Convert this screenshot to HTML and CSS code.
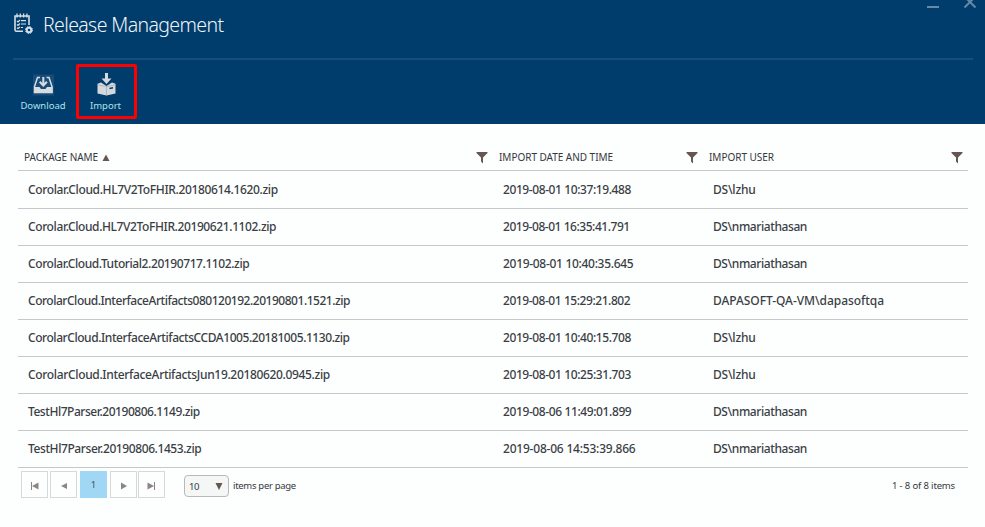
FILE: index.html
```html
<!DOCTYPE html>
<html lang="en">
<head>
<meta charset="utf-8">
<title>Release Management</title>
<link rel="stylesheet" href="styles.css">
</head>
<body>
<header class="blade">
  <div class="title-row">
    <svg class="title-icon" width="20" height="22" viewBox="0 0 20 22" fill="none" stroke="#d5dfe6" stroke-width="1.6">
      <path d="M10 18.200H3.500Q2 18.200 2 16.800V3H16V12"/>
      <path d="M4 .5V4.500M7.300 .5V4.500M10.600 .5V4.500M13.900 .5V4.500" stroke-width="1.300"/>
      <path d="M4 8l1 1 2-2M4 11.500l1 1 2-2M4 14.800l1 .8 2-1.500M8 7.700H13M8 11H13M8 14.500H10" stroke-width="1.200"/>
      <circle cx="16" cy="17" r="2.300" stroke-width="2"/>
      <circle cx="16" cy="17" r="3.500" stroke-width="1" stroke-dasharray="1.500 1.250"/>
    </svg>
    <h1>Release Management</h1>
    <div class="window-buttons">
      <svg width="52" height="10" viewBox="0 0 52 10" stroke="#6689a6" fill="none"><path d="M1 7H13" stroke-width="2"/><path d="M38.500-3.500L49.500 7.500M49.500-3.500L38.500 7.500" stroke-width="2"/></svg>
    </div>
  </div>
  <nav class="toolbar">
    <button class="tool">
      <svg width="21" height="21" viewBox="0 0 21 21"><path fill="#174d78" d="M0 0H21V21H0z"/><path d="M7 3H4.500L1.500 12V18H19V12L16 3H13.500" fill="none" stroke="#d7dce0" stroke-width="1.500"/><path d="M1 12.500H6.500L8 14.500H12.500L14 12.500H19.500V18.500H1z" fill="#d7dce0"/><path d="M10.300 2.500V10M6.700 7.300L10.300 11L13.900 7.300" fill="none" stroke="#d7dce0" stroke-width="2"/></svg>
      <span class="download-label">Download</span>
    </button>
    <button class="tool selected">
      <svg width="21" height="24" viewBox="0 0 21 24" fill="#d4d7db"><path d="M9 1H12V6.500H15.500L10.500 12L5.500 6.500H9z"/><path d="M5 10.500L10.500 14L16 10.500L19.500 11.800V21.500L10.500 23.500L1.500 21.500V11.800z"/><path d="M1.500 12.800L10.500 14.500V23.500M10.500 14.500L19.500 12.800" fill="none" stroke="#8fa3b3" stroke-width=".6"/><path d="M13.500 16.500L17 15.700" stroke="#003c6c" stroke-width="1.400"/></svg>
      <span class="import-label">Import</span>
    </button>
  </nav>
</header>
<main>
  <table>
    <colgroup><col class="name-col"><col class="date-col"><col></colgroup>
    <thead><tr>
      <th><div class="head"><span>PACKAGE NAME</span><svg class="sort" width="8" height="7"><path d="M4 .5L7.500 7H.5z"/></svg><svg class="filter" width="12" height="12"><path d="M.5 0H11.500V1L7 5.500V11.500L5 9.500V5.500L.5 1z"/></svg></div></th>
      <th><div class="head"><span>IMPORT DATE AND TIME</span><svg class="filter" width="12" height="12"><path d="M.5 0H11.500V1L7 5.500V11.500L5 9.500V5.500L.5 1z"/></svg></div></th>
      <th><div class="head"><span>IMPORT USER</span><svg class="filter" width="12" height="12"><path d="M.5 0H11.500V1L7 5.500V11.500L5 9.500V5.500L.5 1z"/></svg></div></th>
    </tr></thead>
    <tbody>
      <tr><td class="t35">Corolar.Cloud.HL7V2ToFHIR.20180614.1620.zip</td><td class="t42">2019-08-01 10:37:19.488</td><td class="t20">DS\lzhu</td></tr>
      <tr><td class="t39">Corolar.Cloud.HL7V2ToFHIR.20190621.1102.zip</td><td class="t46">2019-08-01 16:35:41.791</td><td class="t42">DS\nmariathasan</td></tr>
      <tr><td class="t42">Corolar.Cloud.Tutorial2.20190717.1102.zip</td><td class="t30">2019-08-01 10:40:35.645</td><td class="t42">DS\nmariathasan</td></tr>
      <tr><td class="t47">CorolarCloud.InterfaceArtifacts080120192.20190801.1521.zip</td><td class="t44">2019-08-01 15:29:21.802</td><td class="t05">DAPASOFT-QA-VM\dapasoftqa</td></tr>
      <tr><td class="t44">CorolarCloud.InterfaceArtifactsCCDA1005.20181005.1130.zip</td><td class="t42">2019-08-01 10:40:15.708</td><td class="t20">DS\lzhu</td></tr>
      <tr><td class="t34">CorolarCloud.InterfaceArtifactsJun19.20180620.0945.zip</td><td class="t42">2019-08-01 10:25:31.703</td><td class="t20">DS\lzhu</td></tr>
      <tr><td class="t46">TestHl7Parser.20190806.1149.zip</td><td class="t39">2019-08-06 11:49:01.899</td><td class="t42">DS\nmariathasan</td></tr>
      <tr><td class="t42">TestHl7Parser.20190806.1453.zip</td><td class="t20">2019-08-06 14:53:39.866</td><td class="t42">DS\nmariathasan</td></tr>
    </tbody>
  </table>
  <footer class="pager">
    <div class="pages">
      <button><svg width="9" height="8"><path d="M1 0H2V8H1zM8.500 .5V7.500L2 4z"/></svg></button>
      <button><svg width="8" height="8"><path d="M7 1V7L1 4z"/></svg></button>
      <button class="current">1</button>
      <button><svg width="8" height="8"><path d="M1 .5V7.500L7 4z"/></svg></button>
      <button class="last"><svg width="9" height="8"><path d="M7 0H8V8H7zM.5 .5V7.500L7 4z"/></svg></button>
    </div>
    <div class="size"><span>10</span><svg width="8" height="7"><path d="M.5 0H7.500L4 7z"/></svg></div>
    <span class="per-page">items per page</span>
    <span class="count">1 - 8 of 8 items</span>
  </footer>
</main>
</body>
</html>
```

FILE: styles.css
```css
* { box-sizing: border-box; }
body { margin: 0; width: 985px; height: 527px; overflow: hidden; background: #fdfefe; color: #343840; font-family: "Noto Sans", "Open Sans", sans-serif; }
button { font: inherit; padding: 0; border: 0; background: none; }
svg { display: block; flex: none; }

.blade { height: 124px; padding: 0 12px 0 13px; background: #003c6c; }
.title-row { display: flex; height: 60px; border-bottom: 2px solid #174d78; }
.title-icon { margin-top: 13px; }
h1 { margin: 10px 0 0 10px; font-size: 19.5px; line-height: 30px; font-weight: 300; letter-spacing: -.62px; color: #f0f5f8; white-space: nowrap; }
.window-buttons { margin-left: auto; margin-right: -5px; }
.toolbar { display: flex; padding-top: 4px; }
.tool { display: flex; flex-direction: column; align-items: center; width: 60px; height: 55px; padding-top: 9px; color: #b1e1e7; font-size: 9.5px; line-height: 14px; }
.tool svg { height: 24px; margin-bottom: 2px; }
.tool.selected { width: 61px; margin-left: 3px; padding-top: 5px; border: 3px solid #fe0000; border-radius: 2px; }
.tool.selected svg { margin-bottom: 3px; }
.import-label { margin-right: 2px; }

main { padding: 20px 17px 0 18px; }
table { width: 950px; table-layout: fixed; border-collapse: separate; border-spacing: 0; }
.name-col { width: 475px; }
.date-col { width: 210px; }
th, td { padding: 0 0 0 10px; border-bottom: 1px solid #c5c8c8; text-align: left; white-space: nowrap; }
th { height: 27px; padding: 0 5px 0 6px; font-size: 10px; font-weight: 400; line-height: 26px; letter-spacing: -.03px; }
td { height: 37px; color: #3a3e45; font-size: 12px; font-weight: 500; line-height: 36px; }
tbody tr:first-child td { height: 38px; }
.head { display: flex; align-items: center; height: 26px; }
.head svg, .pager svg { fill: #65564f; }
.sort { margin: 1px 0 0 4px; }
.filter { margin: 1px 0 0 auto; }

/* Tracking steps, in hundredths of a pixel */
.t05 { letter-spacing: -.05px; }
.t20 { letter-spacing: -.21px; }
.t30 { letter-spacing: -.3px; }
.t34 { letter-spacing: -.335px; }
.t35 { letter-spacing: -.35px; }
.t39 { letter-spacing: -.39px; }
.t42 { letter-spacing: -.41px; }
.t44 { letter-spacing: -.44px; }
.t46 { letter-spacing: -.46px; }
.t47 { letter-spacing: -.475px; }

.pager { display: flex; height: 40px; padding-left: 3px; font-size: 9.5px; }
.pages { display: flex; gap: 2px; padding-top: 3px; }
.pages button { display: flex; align-items: center; justify-content: center; width: 27px; height: 27px; border: 1px solid #d6d9d9; }
.pages .current { margin: 0 1px; background: #9fd7f5; border-color: #9fd7f5; color: #43515c; }
.pages .last { margin-left: -1px; }
.pages svg { fill: #8d8584; margin-top: 3px; }
.size { display: flex; align-items: center; justify-content: space-between; width: 45px; height: 22px; margin: 7px 0 0 19px; padding: 0 5px 0 4px; border: 1px solid #b7baba; border-radius: 4px; background: #f5f6f6; letter-spacing: -.5px; }
.per-page, .count { line-height: 14px; margin-top: 11px; }
.per-page { margin-left: 4px; letter-spacing: -.3px; }
.count { margin-left: auto; margin-right: 13px; letter-spacing: -.15px; }
```
